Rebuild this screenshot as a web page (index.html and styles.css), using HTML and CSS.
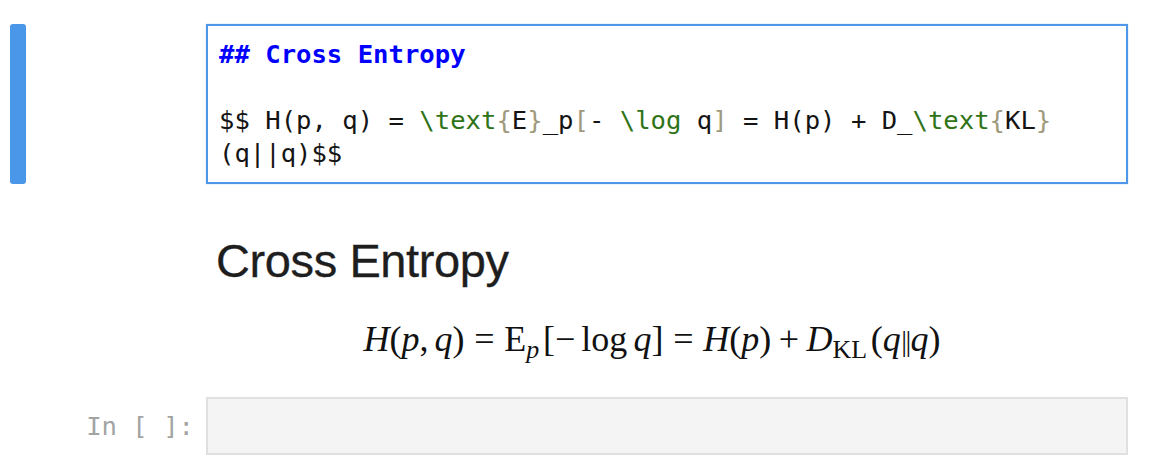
FILE: index.html
```html
<!DOCTYPE html>
<html>
<head>
<meta charset="utf-8">
<link rel="stylesheet" href="styles.css">
</head>
<body>
<div class="notebook">
  <div class="cell md-cell">
    <div class="cell-row">
      <div class="gutter"><div class="sel-bar"></div></div>
      <div class="editor">
        <div class="cm-line"><span class="cm-header">## Cross Entropy</span></div>
        <div class="cm-line"> </div>
        <div class="cm-line">$$ H(p, q) = <span class="cm-tag">\text</span><span class="cm-br">{</span>E<span class="cm-br">}</span>_p<span class="cm-br">[</span>- <span class="cm-tag">\log</span> q<span class="cm-br">]</span> = H(p) + D_<span class="cm-tag">\text</span><span class="cm-br">{</span>KL<span class="cm-br">}</span></div>
        <div class="cm-line">(q||q)$$</div>
      </div>
    </div>
    <div class="rendered">
      <h2 class="md-heading">Cross Entropy</h2>
      <div class="math"><i>H</i>(<i>p</i>,<span class="thin"></span><i>q</i>)<span class="rel">=</span>E<sub><i>p</i></sub><span class="sp"></span>[−<span class="lop">log</span><i>q</i>]<span class="rel">=</span><i>H</i>(<i>p</i>)<span class="bin">+</span><i>D</i><sub>KL</sub><span class="sp"></span>(<i>q</i><span class="bars">||</span><i>q</i>)</div>
    </div>
  </div>
  <div class="cell code-cell">
    <div class="prompt">In&nbsp;[&nbsp;]:</div>
    <div class="input-box"></div>
  </div>
</div>
</body>
</html>
```
FILE: styles.css
```css
* { box-sizing: border-box; }
html, body { margin: 0; padding: 0; background: #ffffff; }
body { width: 1152px; height: 476px; overflow: hidden; }

.notebook {
  padding: 24px 24px 0 10px;
}

.cell-row {
  display: flex;
  align-items: stretch;
}

.gutter {
  width: 196px;
  flex: none;
  display: flex;
}
.sel-bar {
  width: 16px;
  background: #4a97e9;
  border-radius: 3px;
}

.editor {
  flex: 1;
  border: 2px solid #4d97e6;
  box-shadow: 0 0 1px rgba(77, 151, 230, 0.6);
  padding: 12px 11px 12px 11px;
  font-family: "DejaVu Sans Mono", monospace;
  font-size: 25.6px;
  line-height: 33px;
  color: #141414;
}
.cm-line { height: 33px; white-space: pre; }
.cm-header { color: #0000ff; font-weight: bold; }
.cm-tag { color: #2f7317; }
.cm-br { color: #a09a7c; }

.rendered {
  margin-left: 196px;
  padding: 0 8px 0 10px;
}
.md-heading {
  margin: 49px 0 0 0;
  font-family: "Liberation Sans", Arial, sans-serif;
  font-weight: normal;
  font-size: 47px;
  line-height: 55px;
  color: #1e1e1e;
  letter-spacing: -0.4px;
  -webkit-text-stroke: 0.3px #1e1e1e;
}

.math {
  margin-top: 31px;
  padding-right: 32px;
  text-align: center;
  font-family: "Liberation Serif", "Times New Roman", serif;
  font-size: 36px;
  line-height: 40px;
  color: #111111;
  white-space: nowrap;
}
.math i { font-style: italic; }
.math sub {
  font-size: 0.72em;
  vertical-align: -0.28em;
  line-height: 0;
}
.math .rel { margin: 0 0.27em; }
.math .bin { margin: 0 0.21em; }
.math .thin { display: inline-block; width: 0.17em; }
.math .sp { display: inline-block; width: 0.1em; }
.math .lop { margin: 0 0.17em 0 0.17em; }
.math .bars { font-size: 0.8em; letter-spacing: -0.05em; margin: 0 0.02em; }

.code-cell {
  display: flex;
  align-items: center;
  margin-top: 36px;
}
.prompt {
  width: 196px;
  flex: none;
  text-align: right;
  padding-right: 12px;
  font-family: "DejaVu Sans Mono", monospace;
  font-size: 25.6px;
  line-height: 33px;
  color: #a3a3a3;
}
.input-box {
  flex: 1;
  height: 58px;
  background: #f4f4f4;
  border: 2px solid #e0e0e0;
}
```
